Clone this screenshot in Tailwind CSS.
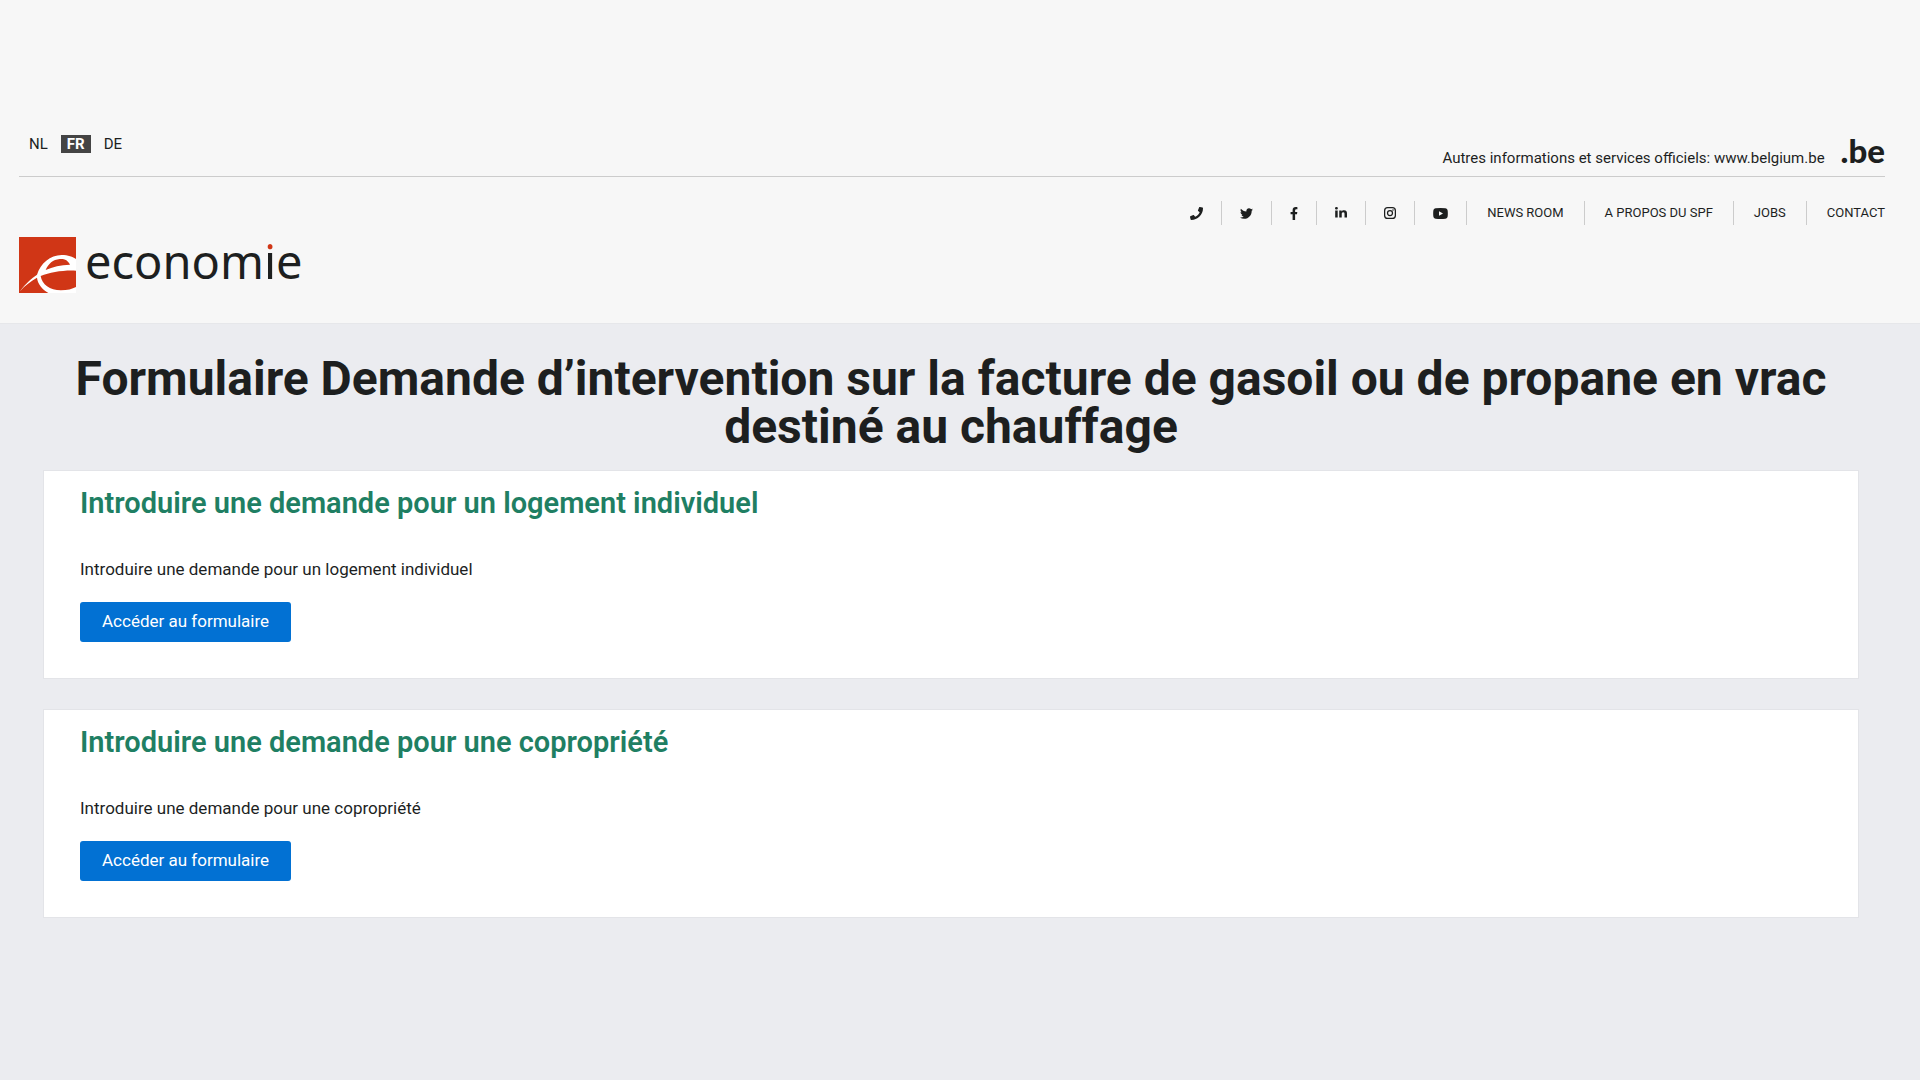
<!DOCTYPE html>
<html lang="fr">
<head>
    <meta charset="utf-8">
    <meta name="viewport" content="width=device-width, initial-scale=1">
    <title>SPF Economie - Formulaire</title>
    <script src="https://cdn.jsdelivr.net/npm/@tailwindcss/browser@4"></script>
</head>
<body class="min-h-screen bg-[#ebecf0] font-[Roboto,sans-serif] text-[#1d1f1f]">
<header class="bg-[#f7f7f7] border-b border-[#e6e7ea] pt-[132px] pb-[30px] pl-[19px] pr-[35px]">
    <!-- langues + belgium.be -->
    <div class="flex justify-between border-b border-[#cccccc] h-[45px]">
        <nav class="flex items-start gap-[7px] pt-[3px] pl-1 text-[15px] leading-[18px]" aria-label="Langue">
            <a href="#" class="px-[6px]">NL</a>
            <a href="#" class="px-[6px] bg-[#444444] text-white font-bold">FR</a>
            <a href="#" class="px-[6px]">DE</a>
        </nav>
        <div class="flex items-baseline gap-4">
            <p class="text-[15px]">Autres informations et services officiels: <a href="#">www.belgium.be</a></p>
            <a href="#" class="font-[Lato,sans-serif] font-black text-[33px] leading-[36px]">.be</a>
        </div>
    </div>

    <!-- liens -->
    <ul class="flex items-center justify-end mt-6 text-[13px] leading-6 divide-x divide-[#cccccc]">
        <li class="px-[18px]">
            <a href="#" aria-label="Téléphone" class="flex h-6 items-center">
                <svg class="size-[13px]" viewBox="0 0 512 512" fill="currentColor"><path d="M493.4 24.6l-104-24c-11.300-2.600-22.900 3.300-27.500 13.900l-48 112c-4.200 9.800-1.400 21.300 6.900 28l60.600 49.600c-36 76.700-98.900 140.500-177.200 177.200l-49.600-60.600c-6.800-8.300-18.200-11.100-28-6.900l-112 48C3.900 366.500-2 378.100.6 389.400l24 104C27.100 504.200 36.700 512 48 512c256.100 0 464-207.500 464-464 0-11.200-7.700-20.900-18.600-23.400z"/></svg>
            </a>
        </li>
        <li class="px-[18px]">
            <a href="#" aria-label="Twitter" class="flex h-6 items-center">
                <svg class="size-[13px]" viewBox="0 0 512 512" fill="currentColor"><path d="M459.370 151.716c.325 4.548.325 9.097.325 13.645 0 138.720-105.583 298.558-298.558 298.558-59.452 0-114.680-17.219-161.137-47.106 8.447.974 16.568 1.299 25.340 1.299 49.055 0 94.213-16.568 130.274-44.832-46.132-.975-84.792-31.188-98.112-72.772 6.498.974 12.995 1.624 19.818 1.624 9.421 0 18.843-1.300 27.614-3.573-48.081-9.747-84.143-51.980-84.143-102.985v-1.299c13.969 7.797 30.214 12.670 47.431 13.319-28.264-18.843-46.781-51.005-46.781-87.391 0-19.492 5.197-37.360 14.294-52.954 51.655 63.675 129.300 105.258 216.365 109.807-1.624-7.797-2.599-15.918-2.599-24.040 0-57.828 46.782-104.934 104.934-104.934 30.213 0 57.502 12.670 76.670 33.137 23.715-4.548 46.456-13.320 66.599-25.340-7.798 24.366-24.366 44.833-46.132 57.827 21.117-2.273 41.584-8.122 60.426-16.243-14.292 20.791-32.161 39.308-52.628 54.253z"/></svg>
            </a>
        </li>
        <li class="px-[18px]">
            <a href="#" aria-label="Facebook" class="flex h-6 items-center">
                <svg class="w-2 h-[13px]" viewBox="0 0 320 512" fill="currentColor"><path d="M279.140 288l14.220-92.660h-88.910v-60.130c0-25.350 12.420-50.060 52.240-50.060h40.420V6.260S260.430 0 225.360 0c-73.220 0-121.080 44.380-121.080 124.720v70.620H22.890V288h81.390v224h100.170V288z"/></svg>
            </a>
        </li>
        <li class="px-[18px]">
            <a href="#" aria-label="LinkedIn" class="flex h-6 items-center">
                <svg class="size-3" viewBox="0 0 448 512" preserveAspectRatio="none" fill="currentColor"><path d="M100.280 448H7.400V148.900h92.880zM53.790 108.100C24.090 108.100 0 83.500 0 53.800a53.790 53.790 0 0 1 107.580 0c0 29.700-24.100 54.300-53.790 54.300zM447.900 448h-92.680V302.400c0-34.700-.7-79.200-48.290-79.200-48.290 0-55.690 37.700-55.690 76.700V448h-92.780V148.900h89.080v40.800h1.300c12.400-23.500 42.690-48.300 87.880-48.300 94 0 111.280 61.900 111.280 142.300V448z"/></svg>
            </a>
        </li>
        <li class="px-[18px]">
            <a href="#" aria-label="Instagram" class="flex h-6 items-center">
                <svg class="size-3" viewBox="1 1 24 24" fill="none" stroke="currentColor" stroke-width="2.500"><rect x="2.250" y="2.250" width="21.500" height="21.500" rx="6"/><circle cx="13" cy="13" r="5"/><circle cx="19" cy="7" r="1.500" fill="currentColor" stroke="none"/></svg>
            </a>
        </li>
        <li class="px-[18px]">
            <a href="#" aria-label="YouTube" class="flex h-6 items-center">
                <svg class="w-[15px] h-[11px]" viewBox="0 0 30 22" fill="currentColor"><path fill-rule="evenodd" d="M5 .5Q15-.5 25 .5Q29 1 29.300 5Q30 11 29.300 17Q29 21 25 21.500Q15 22.500 5 21.500Q1 21 .7 17Q0 11 .7 5Q1 1 5 .5ZM12 6.500V15.500L20 11Z"/></svg>
            </a>
        </li>
        <li class="px-5"><a href="#">NEWS ROOM</a></li>
        <li class="px-5"><a href="#">A PROPOS DU SPF</a></li>
        <li class="px-5"><a href="#">JOBS</a></li>
        <li class="pl-5"><a href="#">CONTACT</a></li>
    </ul>

    <a href="#" class="flex w-fit items-start gap-[9px] mt-3">
        <svg class="w-[57px] h-[56px]" viewBox="0 0 171 168">
            <rect width="171" height="168" fill="#d03616"/>
            <path fill="#fff" d="M2 164C20 139 38 124 54 113C64 80 94 54 128 54C147 54 162 60 171 66V101C132 99 94 106 65 117C69 142 92 160 126 160C145 160 160 156 171 150V168H88C69 156 56 141 54 122C36 132 18 145 2 164ZM80 99C101 89 125 84 153 83C147 70 137 65 122 66C102 68 88 80 80 99Z"/>
        </svg>
        <span class="font-['Noto_Sans',sans-serif] text-[47px] leading-[48px]">econom<span class="text-transparent bg-clip-text bg-linear-to-b from-[#d03616] from-36% to-[#1d1f1f] to-36%">i</span>e</span>
    </a>
</header>

<main class="pt-[31px] pl-[43px] pr-[61px]">
    <h1 class="text-[48px] leading-[48px] font-bold text-center">Formulaire Demande d’intervention sur la facture de gasoil ou de propane en vrac destiné au chauffage</h1>

    <section class="mt-[19px] bg-white border border-[#e3e4e8] px-9 pt-4 pb-9">
        <h2 class="text-[29px] leading-8 font-semibold text-[#1f7f63]">Introduire une demande pour un logement individuel</h2>
        <p class="mt-[38px] text-[17px] leading-6">Introduire une demande pour un logement individuel</p>
        <button type="button" class="mt-[21px] h-10 px-[22px] rounded-[3px] bg-[#0271d3] text-[17px] text-white">Accéder au formulaire</button>
    </section>

    <section class="mt-[30px] bg-white border border-[#e3e4e8] px-9 pt-4 pb-9">
        <h2 class="text-[29px] leading-8 font-semibold text-[#1f7f63]">Introduire une demande pour une copropriété</h2>
        <p class="mt-[38px] text-[17px] leading-6">Introduire une demande pour une copropriété</p>
        <button type="button" class="mt-[21px] h-10 px-[22px] rounded-[3px] bg-[#0271d3] text-[17px] text-white">Accéder au formulaire</button>
    </section>
</main>
</body>
</html>
